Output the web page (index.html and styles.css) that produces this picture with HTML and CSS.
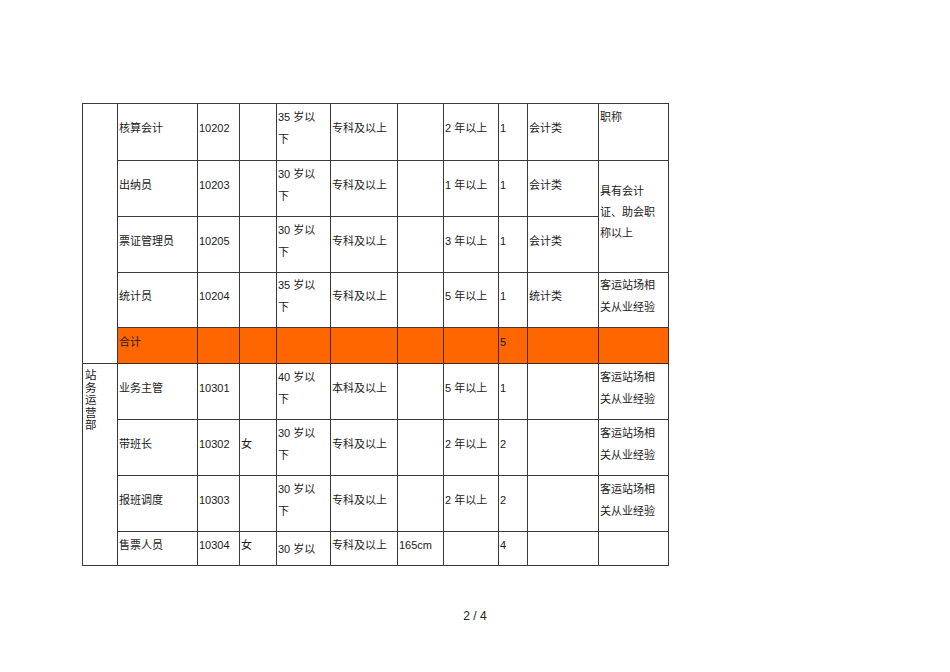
FILE: index.html
```html
<!DOCTYPE html>
<html lang="zh-CN">
<head>
<meta charset="utf-8">
<title>岗位表</title>
<link rel="stylesheet" href="styles.css">
</head>
<body>
<div class="page">
  <table class="jobs">
    <colgroup>
      <col class="c1"><col class="c2"><col class="c3"><col class="c4"><col class="c5"><col class="c6">
      <col class="c7"><col class="c8"><col class="c9"><col class="c10"><col class="c11">
    </colgroup>
    <tbody>
      <tr class="r57">
        <td rowspan="5"></td>
        <td>核算会计</td><td>10202</td><td></td><td>35 岁以<br>下</td><td>专科及以上</td><td></td><td>2 年以上</td><td>1</td><td>会计类</td><td class="top">职称</td>
      </tr>
      <tr class="r56">
        <td>出纳员</td><td>10203</td><td></td><td>30 岁以<br>下</td><td>专科及以上</td><td></td><td>1 年以上</td><td>1</td><td>会计类</td><td rowspan="2" class="tight">具有会计<br>证、助会职<br>称以上</td>
      </tr>
      <tr class="r56">
        <td>票证管理员</td><td>10205</td><td></td><td>30 岁以<br>下</td><td>专科及以上</td><td></td><td>3 年以上</td><td>1</td><td>会计类</td>
      </tr>
      <tr class="r55">
        <td>统计员</td><td>10204</td><td></td><td>35 岁以<br>下</td><td>专科及以上</td><td></td><td>5 年以上</td><td>1</td><td>统计类</td><td>客运站场相<br>关从业经验</td>
      </tr>
      <tr class="r36 total">
        <td>合计</td><td></td><td></td><td></td><td></td><td></td><td></td><td>5</td><td></td><td></td>
      </tr>
      <tr class="r56">
        <td rowspan="4" class="dept"><span class="vtext">站<br>务<br>运<br>营<br>部</span></td>
        <td>业务主管</td><td>10301</td><td></td><td>40 岁以<br>下</td><td>本科及以上</td><td></td><td>5 年以上</td><td>1</td><td></td><td>客运站场相<br>关从业经验</td>
      </tr>
      <tr class="r56">
        <td>带班长</td><td>10302</td><td>女</td><td>30 岁以<br>下</td><td>专科及以上</td><td></td><td>2 年以上</td><td>2</td><td></td><td>客运站场相<br>关从业经验</td>
      </tr>
      <tr class="r56">
        <td>报班调度</td><td>10303</td><td></td><td>30 岁以<br>下</td><td>专科及以上</td><td></td><td>2 年以上</td><td>2</td><td></td><td>客运站场相<br>关从业经验</td>
      </tr>
      <tr class="r34">
        <td>售票人员</td><td>10304</td><td>女</td><td class="low">30 岁以</td><td>专科及以上</td><td>165cm</td><td></td><td>4</td><td></td><td></td>
      </tr>
    </tbody>
  </table>
  <div class="pager">2 / 4</div>
</div>
</body>
</html>
```
FILE: styles.css
```css
html, body {
  margin: 0;
  padding: 0;
  background: #ffffff;
}

.page {
  width: 950px;
  height: 672px;
  padding: 103px 0 0 82px;
  box-sizing: border-box;
  font-family: "Liberation Sans", "Noto Sans CJK SC", sans-serif;
  color: #1a1a1a;
}

.jobs {
  border-collapse: collapse;
  table-layout: fixed;
  width: 587px;
  font-size: 11px;
}

.c1 { width: 35px; }
.c2 { width: 80px; }
.c3 { width: 42px; }
.c4 { width: 37px; }
.c5 { width: 54px; }
.c6 { width: 67px; }
.c7 { width: 46px; }
.c8 { width: 55px; }
.c9 { width: 29px; }
.c10 { width: 71px; }
.c11 { width: 70px; }

.jobs td {
  border: 1px solid #3a3a3a;
  padding: 0 0 8px 1px;
  vertical-align: middle;
  line-height: 22px;
  white-space: nowrap;
  overflow: hidden;
}

.r57 { height: 57px; }
.r56 { height: 56px; }
.r55 { height: 55px; }
.r36 { height: 36px; }
.r34 { height: 34px; }

.total td {
  background: #ff6600;
  border-color: #4a2a10;
}

.jobs td.top {
  vertical-align: top;
  padding: 2px 0 0 1px;
}

.jobs td.tight {
  line-height: 21px;
}

.jobs td.low {
  vertical-align: top;
  padding: 6px 0 0 1px;
}

.jobs td.dept {
  vertical-align: top;
  padding: 5px 0 0 2px;
}

.vtext {
  display: block;
  font-size: 11.5px;
  line-height: 12.5px;
}

.pager {
  width: 786px;
  margin-top: 43px;
  text-align: center;
  font-size: 12px;
  line-height: 14px;
  color: #222;
}
```
